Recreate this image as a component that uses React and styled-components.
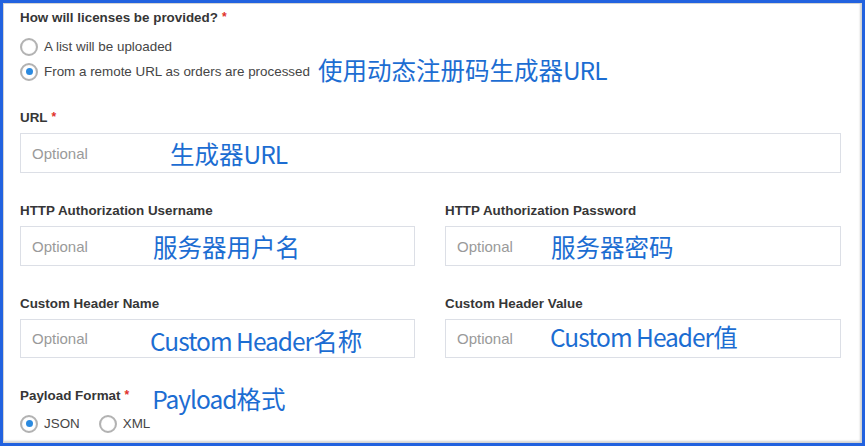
import React from "react";
import styled, { createGlobalStyle } from "styled-components";

const Global = createGlobalStyle`
  html, body { margin: 0; padding: 0; background: #fff; }
  * { box-sizing: border-box; }
`;

const Frame = styled.div`
  width: 865px;
  height: 446px;
  border: 3px solid #2262df;
  box-shadow: inset 1px 1px 0 #d4d4d4, inset -2px -2px 2px rgba(0, 0, 0, 0.18);
  padding: 7px 21px 0 17px;
  font-family: "Liberation Sans", Arial, sans-serif;
  display: flex;
  flex-direction: column;
`;

const Section = styled.div`
  display: flex;
  flex-direction: column;
  margin-top: ${(p) => p.$mt || 0}px;
`;

const Label = styled.div`
  font-size: 13.4px;
  line-height: 16px;
  height: 16px;
  font-weight: bold;
  color: #363636;
  display: flex;
  align-items: center;
  white-space: nowrap;
`;

const Req = styled.span`
  color: #e0302a;
  font-size: 12px;
  margin-left: 4px;
  position: relative;
  top: -1px;
`;

const RadioGroup = styled.div`
  display: flex;
  flex-direction: ${(p) => (p.$inline ? "row" : "column")};
  margin-top: ${(p) => p.$mt || 0}px;
  gap: ${(p) => (p.$inline ? "19px" : "0")};
`;

const RadioRow = styled.label`
  display: flex;
  align-items: center;
  height: 25px;
  font-size: 13.4px;
  color: #454545;
  white-space: nowrap;
`;

const Circle = styled.span`
  width: 18px;
  height: 18px;
  margin-right: 6px;
  border-radius: 50%;
  border: 2px solid #b2b2b2;
  box-shadow: inset 0 0 1px rgba(0, 0, 0, 0.15);
  display: flex;
  align-items: center;
  justify-content: center;
  flex: none;
  &::after {
    content: "";
    width: 7px;
    height: 7px;
    border-radius: 50%;
    background: ${(p) => (p.$checked ? "#2b8ae0" : "transparent")};
  }
`;

const InlineNote = styled.span`
  font-family: "Noto Sans CJK SC", "Microsoft YaHei", sans-serif;
  font-size: 24.5px;
  font-weight: normal;
  color: #1c6dd2;
  margin-left: ${(p) => p.$ml}px;
  position: relative;
  top: ${(p) => p.$dy || 0}px;
  line-height: 1;
`;

const Lat = styled.span`
  letter-spacing: -1px;
`;

const Row = styled.div`
  display: grid;
  grid-template-columns: 395px 396px;
  column-gap: 30px;
  margin-top: ${(p) => p.$mt || 0}px;
`;

const Field = styled.div`
  display: flex;
  flex-direction: column;
  gap: 7px;
`;

const InputBox = styled.div`
  position: relative;
  height: ${(p) => p.$h || 40}px;
  border: 1px solid #dcdfe6;
  background: #fff;
  display: flex;
  align-items: center;
  padding-left: 11px;
`;

const Placeholder = styled.span`
  font-size: 15px;
  color: #9a9a9a;
`;

const Note = styled.span`
  position: absolute;
  left: ${(p) => p.$left}px;
  top: 50%;
  transform: translateY(calc(-50% + ${(p) => p.$dy || 0}px));
  font-family: "Noto Sans CJK SC", "Microsoft YaHei", sans-serif;
  font-size: 24.5px;
  line-height: 1;
  color: #1c6dd2;
  white-space: nowrap;
`;

function Input({ children, left, dy, h }) {
  return (
    <InputBox $h={h}>
      <Placeholder>Optional</Placeholder>
      <Note $left={left} $dy={dy}>
        {children}
      </Note>
    </InputBox>
  );
}

export default function App() {
  return (
    <>
      <Global />
      <Frame>
        <Section>
          <Label>
            How will licenses be provided?<Req>*</Req>
          </Label>
          <RadioGroup $mt={8}>
            <RadioRow>
              <Circle />A list will be uploaded
            </RadioRow>
            <RadioRow>
              <Circle $checked />
              From a remote URL as orders are processed
              <InlineNote $ml={8} $dy={-1}>
                使用动态注册码生成器<Lat>URL</Lat>
              </InlineNote>
            </RadioRow>
          </RadioGroup>
        </Section>

        <Section $mt={26}>
          <Field>
            <Label>
              URL<Req>*</Req>
            </Label>
            <Input left={149} dy={1}>
              生成器<Lat>URL</Lat>
            </Input>
          </Field>
        </Section>

        <Row $mt={30}>
          <Field>
            <Label>HTTP Authorization Username</Label>
            <Input left={132} dy={1}>服务器用户名</Input>
          </Field>
          <Field>
            <Label>HTTP Authorization Password</Label>
            <Input left={105} dy={1}>服务器密码</Input>
          </Field>
        </Row>

        <Row $mt={30}>
          <Field>
            <Label>Custom Header Name</Label>
            <Input left={129} dy={2} h={39}>
              <Lat>Custom Header</Lat>名称
            </Input>
          </Field>
          <Field>
            <Label>Custom Header Value</Label>
            <Input left={104} dy={-2} h={39}>
              <Lat>Custom Header</Lat>值
            </Input>
          </Field>
        </Row>

        <Section $mt={30}>
          <Label>
            Payload Format<Req>*</Req>
            <InlineNote $ml={23} $dy={3}>
              <Lat>Payload</Lat>格式
            </InlineNote>
          </Label>
          <RadioGroup $inline $mt={7}>
            <RadioRow>
              <Circle $checked />JSON
            </RadioRow>
            <RadioRow>
              <Circle />XML
            </RadioRow>
          </RadioGroup>
        </Section>
      </Frame>
    </>
  );
}
